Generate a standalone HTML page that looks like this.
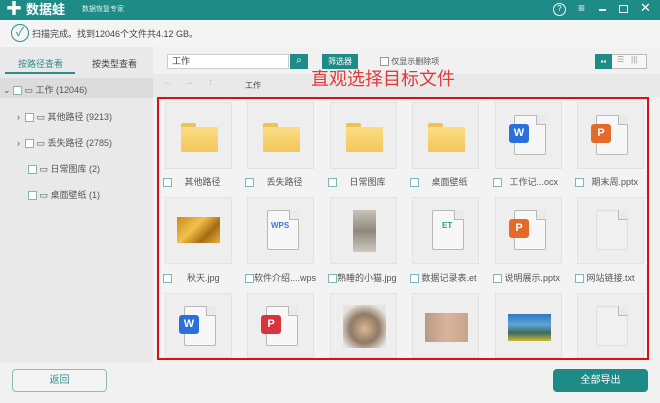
<!DOCTYPE html><html><head><meta charset="utf-8"><style>
*{margin:0;padding:0;box-sizing:border-box}
body{width:660px;height:403px;overflow:hidden;background:#f1f1f1;font-family:"Liberation Sans","Noto Sans CJK SC",sans-serif;position:relative;color:#444}
.a{position:absolute}
.card{position:absolute;width:67px;height:67px;background:#eeeeee;border:1px solid #e2e2e2}
.lbl{position:absolute;font-size:9px;color:#555;height:12px;line-height:12px;white-space:nowrap}
.cb{display:inline-block;width:9px;height:9px;border:1px solid #7fb7b4;background:#fff;vertical-align:middle}
.fold{position:absolute;left:15px;top:20px;width:37px;height:29px}
.fold:before{content:"";position:absolute;left:0;top:0;width:15px;height:8px;background:#efc256;border-radius:2px 2px 0 0}
.fold:after{content:"";position:absolute;left:0;top:4px;width:37px;height:25px;background:linear-gradient(#fbdc84,#f3c75b);border-radius:1px}
.doc{position:absolute;left:18px;top:12px;width:32px;height:40px;background:#f7f7f7;border:1px solid #b9b9b9;border-radius:2px}
.doc:after{content:"";position:absolute;right:-1px;top:-1px;width:9px;height:9px;background:#eaeaea;border-left:1px solid #b9b9b9;border-bottom:1px solid #b9b9b9}
.bdg{position:absolute;left:-6px;top:8px;width:20px;height:19px;border-radius:3px;color:#fff;font-weight:bold;font-size:11px;text-align:center;line-height:19px}
.tree{position:absolute;font-size:9px;color:#555;white-space:nowrap}
</style></head><body>
<div class="a" style="left:0;top:0;width:660px;height:20px;background:#1e8b87"></div>
<div class="a" style="left:6px;top:2px;color:#fff;font-size:16px;font-weight:bold;line-height:16px">✚</div>
<div class="a" style="left:26px;top:2px;color:#fff;font-size:13px;font-weight:bold;line-height:16px">数据蛙</div>
<div class="a" style="left:82px;top:5px;color:#d8efee;font-size:7px;line-height:10px">数据恢复专家</div>
<div class="a" style="left:553px;top:3px;width:13px;height:13px;border:1.5px solid #fff;border-radius:50%;color:#fff;font-size:8px;text-align:center;line-height:10px">?</div>
<div class="a" style="left:578px;top:1px;color:#fff;font-size:12px">≡</div>
<div class="a" style="left:599px;top:9px;width:7px;height:1.5px;background:#fff"></div>
<div class="a" style="left:619px;top:5px;width:9px;height:8px;border:1.5px solid #fff"></div>
<div class="a" style="left:640px;top:0px;color:#fff;font-size:13px">✕</div>
<div class="a" style="left:0;top:20px;width:660px;height:27px;background:#f4f4f4"></div>
<div class="a" style="left:11px;top:24px;width:18px;height:18px;border:1.5px solid #2e8f8a;border-radius:50%;color:#2e8f8a;font-size:12px;text-align:center;line-height:15px">✓</div>
<div class="a" style="left:32px;top:27px;font-size:9px;color:#444">扫描完成。找到12046个文件共4.12 GB。</div>
<div class="a" style="left:0;top:47px;width:153px;height:316px;background:#e9e9e9"></div>
<div class="a" style="left:18px;top:57px;font-size:9px;color:#2e8f8a">按路径查看</div>
<div class="a" style="left:92px;top:57px;font-size:9px;color:#444">按类型查看</div>
<div class="a" style="left:5px;top:72px;width:70px;height:2px;background:#2e8f8a"></div>
<div class="a" style="left:0;top:78px;width:153px;height:20px;background:#dcdcdc"></div>
<div class="tree" style="left:3px;top:83px">⌄ <span class="cb"></span> ▭ 工作 (12046)</div>
<div class="tree" style="left:17px;top:110px">›&nbsp; <span class="cb"></span> ▭ 其他路径 (9213)</div>
<div class="tree" style="left:17px;top:136px">›&nbsp; <span class="cb"></span> ▭ 丢失路径 (2785)</div>
<div class="tree" style="left:28px;top:162px"><span class="cb"></span> ▭ 日常图库 (2)</div>
<div class="tree" style="left:28px;top:188px"><span class="cb"></span> ▭ 桌面壁纸 (1)</div>
<div class="a" style="left:167px;top:54px;width:122px;height:15px;background:#fff;border:1px solid #ccc;font-size:9px;padding-left:4px;line-height:13px">工作</div>
<div class="a" style="left:290px;top:54px;width:18px;height:15px;background:#1e8b87;color:#fff;font-size:10px;text-align:center;line-height:14px">⌕</div>
<div class="a" style="left:322px;top:54px;width:36px;height:15px;background:#1e8b87;color:#fff;font-size:8px;text-align:center;line-height:15px">筛选器</div>
<div class="a" style="left:380px;top:56px;font-size:8px;color:#555"><span class="cb" style="border-color:#999"></span> 仅显示删除项</div>
<div class="a" style="left:595px;top:54px;width:52px;height:15px;border:1px solid #bbb;background:#f7f7f7"></div>
<div class="a" style="left:595px;top:54px;width:17px;height:15px;background:#1e8b87;color:#fff;font-size:8px;text-align:center;line-height:15px">▪▪</div>
<div class="a" style="left:617px;top:55px;font-size:8px;color:#999">☰</div>
<div class="a" style="left:631px;top:55px;font-size:8px;color:#999">|||</div>
<div class="a" style="left:153px;top:74px;width:507px;height:23px;background:#e9e9e9"></div>
<div class="a" style="left:163px;top:77px;font-size:10px;color:#bbb">←&nbsp;&nbsp;&nbsp;&nbsp;→&nbsp;&nbsp;&nbsp;&nbsp;&nbsp;↑</div>
<div class="a" style="left:245px;top:80px;font-size:8px;color:#444">工作</div>
<div class="a" style="left:311px;top:68px;font-size:18px;color:#e03a3a;line-height:22px">直观选择目标文件</div>
<div class="a" style="left:157px;top:97px;width:492px;height:263px;border:2px solid #e00d16;background:#f3f3f3"></div>

<div class="card" style="left:165px;top:102px"><div class="fold"></div></div>
<div class="card" style="left:247px;top:102px"><div class="fold"></div></div>
<div class="card" style="left:330px;top:102px"><div class="fold"></div></div>
<div class="card" style="left:412px;top:102px"><div class="fold"></div></div>
<div class="card" style="left:495px;top:102px"><div class="doc"><div class="bdg" style="background:#2a6fdb">W</div></div></div>
<div class="card" style="left:577px;top:102px"><div class="doc"><div class="bdg" style="background:#e46a2a">P</div></div></div>
<div class="lbl" style="left:163px;top:176px"><span class="cb"></span>&nbsp;&nbsp;&nbsp;&nbsp;&nbsp;其他路径</div>
<div class="lbl" style="left:245px;top:176px"><span class="cb"></span>&nbsp;&nbsp;&nbsp;&nbsp;&nbsp;丢失路径</div>
<div class="lbl" style="left:328px;top:176px"><span class="cb"></span>&nbsp;&nbsp;&nbsp;&nbsp;&nbsp;日常图库</div>
<div class="lbl" style="left:410px;top:176px"><span class="cb"></span>&nbsp;&nbsp;&nbsp;&nbsp;&nbsp;桌面壁纸</div>
<div class="lbl" style="left:493px;top:176px"><span class="cb"></span>&nbsp;&nbsp;&nbsp;工作记...ocx</div>
<div class="lbl" style="left:575px;top:176px"><span class="cb"></span>&nbsp;&nbsp;&nbsp;期末周.pptx</div>
<div class="card" style="left:165px;top:197px"><div class="a" style="left:11px;top:19px;width:43px;height:26px;background:linear-gradient(135deg,#c98a1a,#f2c14a 40%,#a56a12 70%,#e7b23d)"></div></div>
<div class="card" style="left:247px;top:197px"><div class="doc" style="left:19px"><div class="a" style="left:3px;top:10px;font-size:8px;font-weight:bold;color:#3b7bd4">WPS</div></div></div>
<div class="card" style="left:330px;top:197px"><div class="a" style="left:22px;top:12px;width:23px;height:42px;background:linear-gradient(#c9c3b8,#8f887c 50%,#cfc8bc)"></div></div>
<div class="card" style="left:412px;top:197px"><div class="doc" style="left:19px"><div class="a" style="left:9px;top:10px;font-size:8px;font-weight:bold;color:#2e9d7a">ET</div></div></div>
<div class="card" style="left:495px;top:197px"><div class="doc"><div class="bdg" style="background:#e46a2a">P</div></div></div>
<div class="card" style="left:577px;top:197px"><div class="doc" style="border-color:#ddd;background:#f0f0f0"></div></div>
<div class="lbl" style="left:163px;top:272px"><span class="cb"></span>&nbsp;&nbsp;&nbsp;&nbsp;&nbsp;&nbsp;秋天.jpg</div>
<div class="lbl" style="left:245px;top:272px"><span class="cb"></span>软件介绍....wps</div>
<div class="lbl" style="left:328px;top:272px"><span class="cb"></span>熟睡的小猫.jpg</div>
<div class="lbl" style="left:410px;top:272px"><span class="cb"></span>&nbsp;数据记录表.et</div>
<div class="lbl" style="left:493px;top:272px"><span class="cb"></span>&nbsp;说明展示.pptx</div>
<div class="lbl" style="left:575px;top:272px"><span class="cb"></span>&nbsp;网站链接.txt</div>
<div class="card" style="left:165px;top:293px;height:65px"><div class="doc"><div class="bdg" style="background:#2a6fdb">W</div></div></div>
<div class="card" style="left:247px;top:293px;height:65px"><div class="doc"><div class="bdg" style="background:#d9333b">P</div></div></div>
<div class="card" style="left:330px;top:293px;height:65px"><div class="a" style="left:12px;top:11px;width:43px;height:43px;background:radial-gradient(circle at 50% 55%,#d8b890,#8f7a66 45%,#e8e4dc 80%)"></div></div>
<div class="card" style="left:412px;top:293px;height:65px"><div class="a" style="left:12px;top:19px;width:43px;height:29px;background:linear-gradient(90deg,#b89a84,#d9b49c 50%,#c8a48a)"></div></div>
<div class="card" style="left:495px;top:293px;height:65px"><div class="a" style="left:12px;top:20px;width:43px;height:27px;background:linear-gradient(#2f78c0,#5fa3d8 40%,#3f6a58 70%,#c9b93c)"></div></div>
<div class="card" style="left:577px;top:293px;height:65px"><div class="doc" style="border-color:#ddd;background:#f0f0f0"></div></div>

<div class="a" style="left:12px;top:369px;width:95px;height:23px;border:1px solid #8fb9b6;border-radius:4px;background:#f4f4f4;font-size:10px;color:#2e8f8a;text-align:center;line-height:21px">返回</div>
<div class="a" style="left:553px;top:369px;width:95px;height:23px;border-radius:4px;background:#1e8b87;font-size:10px;color:#fff;text-align:center;line-height:23px">全部导出</div>
</body></html>
